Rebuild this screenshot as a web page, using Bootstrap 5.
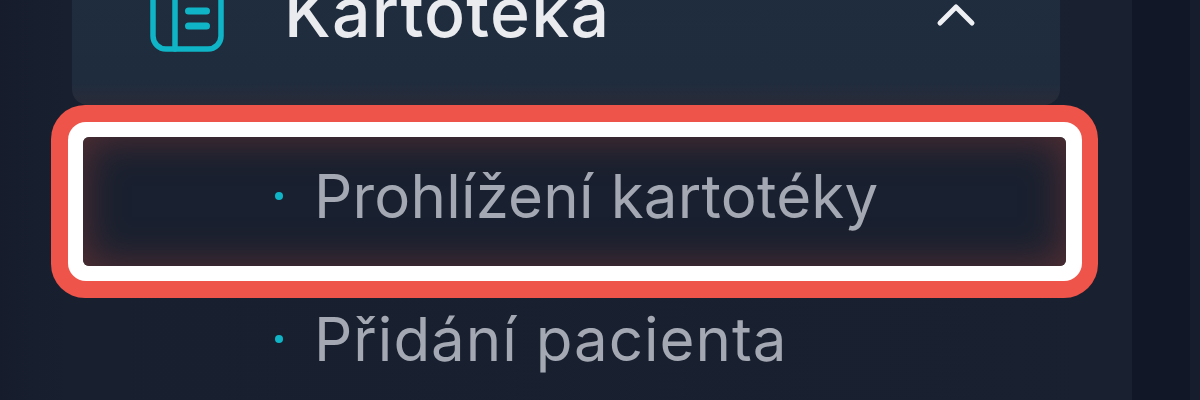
<!DOCTYPE html>
<html lang="cs">
<head>
<meta charset="utf-8">
<link rel="stylesheet" href="https://cdn.jsdelivr.net/npm/bootstrap@5.3.0/dist/css/bootstrap.min.css">
<style>
html,body{height:400px;overflow:hidden}
body{background:#111726;font-family:"Inter","Noto Sans",sans-serif}
.side-shell{height:400px}
.side-main{width:1132px;background:linear-gradient(90deg,#161c2b 0,#18202f 6%,#19202f 100%);padding:0 72px}
.side-gutter{width:58px;background:#111726}
.side-end{width:10px;background:#161d2c}
.parent-row{width:988px;margin-top:-81px;height:186px;background:linear-gradient(180deg,#1f2d3e 0,#1f2c3d 88%,#2a2b38 100%);border-radius:0 0 16px 16px;padding-left:78px;padding-right:84px}
.parent-ico{width:74px;height:80px;flex:none}
.parent-label{margin-left:60px;font-size:68px;font-weight:500;color:#e9ebef;line-height:1;letter-spacing:1.2px}
.parent-chev{width:40px;height:26px;margin-top:5px}
.focus-wrap{margin-left:-21px;width:1047px;height:193px;background:#ee5449;border-radius:34px;padding:17px 16px 17px 17px}
.focus-white{background:#fff;border-radius:18px;padding:15px 16px 15px 15px;height:159px}
.sub-inner{height:129px;border-radius:6px;background:#19202f;box-shadow:inset 0 0 40px 0 #5a3033;padding-left:192px;padding-bottom:11px}
.sub-dot{width:8px;height:8px;border-radius:50%;background:#0fb5c6;flex:none}
.sub-text{margin-left:31px;font-size:60px;line-height:1;color:#a4a8b3;font-weight:400;white-space:nowrap;letter-spacing:.2px}
.sub-plain{padding-left:203px;height:90px;padding-bottom:8px}
.sub-plain .sub-text{letter-spacing:1px}
</style>
</head>
<body>
<div class="d-flex side-shell">
  <div class="side-main">
    <div class="parent-row d-flex align-items-center">
      <svg class="parent-ico" viewBox="0 0 74 80" fill="none" stroke="#0fb5c6" stroke-width="5.500" stroke-linecap="round" stroke-linejoin="round"><rect x="3" y="3" width="68" height="74" rx="13"/><path d="M25 3V77"/><path d="M38.500 24H56.500M38.500 39H56.500M38.500 54H56.500" stroke-width="7"/></svg>
      <span class="parent-label">Kartotéka</span>
      <svg class="parent-chev ms-auto" viewBox="0 0 40 26" fill="none" stroke="#eef0f4" stroke-width="5" stroke-linecap="round" stroke-linejoin="round"><path d="M4 21 20 5 36 21"/></svg>
    </div>
    <div class="focus-wrap">
      <div class="focus-white">
        <div class="sub-inner d-flex align-items-center">
          <span class="sub-dot"></span>
          <span class="sub-text">Prohlížení kartotéky</span>
        </div>
      </div>
    </div>
    <div class="sub-plain d-flex align-items-center">
      <span class="sub-dot"></span>
      <span class="sub-text">Přidání pacienta</span>
    </div>
  </div>
  <div class="side-gutter"></div>
  <div class="side-end"></div>
</div>
<script src="https://cdn.jsdelivr.net/npm/bootstrap@5.3.0/dist/js/bootstrap.bundle.min.js"></script>
</body>
</html>
